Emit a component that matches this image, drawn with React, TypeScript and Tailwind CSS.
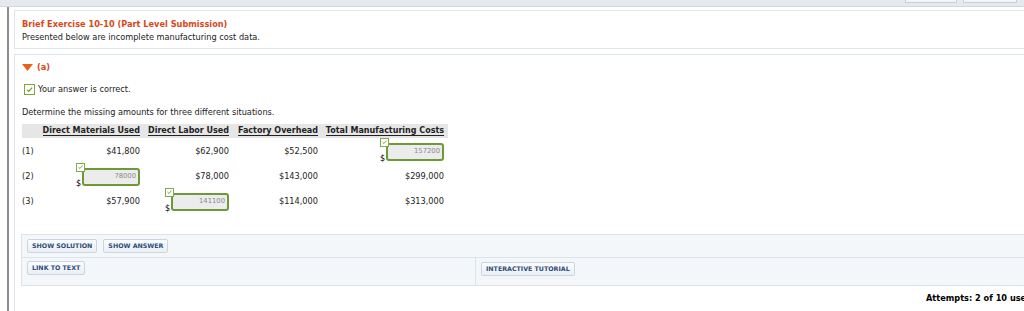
import React from "react";

const font = { fontFamily: '"DejaVu Sans", Verdana, sans-serif' };

function Check({ size = 9 }: { size?: number }) {
  return (
    <svg width={size} height={size} viewBox="0 0 10 10">
      <path d="M2.2 5.2 L4.2 7.1 L7.9 3" fill="none" stroke="#6c9a2f" strokeWidth="1.3" />
    </svg>
  );
}

function Ans({ v }: { v: string }) {
  return (
    <div className="relative ml-auto h-[18px] w-[58px]">
      <span className="absolute bottom-[-2px] left-[-6px] text-[8px] leading-none text-black">$</span>
      <div className="absolute left-[-6px] top-[-5px] z-10 flex h-[9px] w-[9px] items-center justify-center border border-[#84a94c] bg-white">
        <Check size={8} />
      </div>
      <div className="relative flex h-full w-full items-center justify-end rounded-[3px] border-2 border-[#6e9a36] bg-[#ececec] pr-[2px] text-[6.8px] text-[#8a8a8a]">
        {v}
      </div>
    </div>
  );
}

function Btn({ children }: { children: React.ReactNode }) {
  return (
    <div className="flex h-[14px] items-center rounded-[2px] border border-[#cdd6e0] bg-gradient-to-b from-[#fbfcfd] to-[#eaeff4] px-[4px] text-[6.3px] font-bold text-[#2d4b7c]">
      {children}
    </div>
  );
}

const H = ({ children }: { children: React.ReactNode }) => (
  <span className="whitespace-nowrap border-b border-[#222] leading-[10px]">{children}</span>
);

export default function App() {
  const rows: React.ReactNode[][] = [
    ["(1)", "$41,800", "$62,900", "$52,500", <Ans v="157200" />],
    ["(2)", <Ans v="78000" />, "$78,000", "$143,000", "$299,000"],
    ["(3)", "$57,900", <Ans v="141100" />, "$114,000", "$313,000"],
  ];
  return (
    <div className="relative h-[311px] w-[1024px] overflow-hidden bg-white text-[8.2px] text-[#222]" style={font}>
      <div className="flex h-[7px] justify-end gap-[6px] border-b border-[#cfd7e0] bg-[#e6eaee] pr-[7px]">
        <div className="h-[3px] w-[52px] border border-t-0 border-[#c7cfd8] bg-[#f2f4f6]" />
        <div className="h-[3px] w-[54px] border border-t-0 border-[#c7cfd8] bg-[#f2f4f6]" />
      </div>
      <div className="flex h-[304px]">
        <div className="w-[14px] shrink-0">
          <div className="ml-[7px] h-full w-[2px] bg-[#8d8d8d]" />
        </div>
        <div className="flex-1">
          <div className="mt-[3px] h-[39px] border border-r-0 border-[#dfe5ec] pl-[7px]">
            <div className="mt-[8px] h-[10px] font-bold leading-[10px] text-[#d8481a]">
              Brief Exercise 10-10 (Part Level Submission)
            </div>
            <div className="mt-[3px] h-[10px] leading-[10px]">
              Presented below are incomplete manufacturing cost data.
            </div>
          </div>
          <div className="mt-[5px] h-[260px] border border-r-0 border-b-0 border-[#dfe5ec] pl-[7px]">
            <div className="mt-[6px] flex h-[13px] items-center gap-[4px]">
              <svg width="11" height="7" viewBox="0 0 11 7">
                <path d="M0 0 L11 0 L5.5 7 Z" fill="#e8611c" />
              </svg>
              <span className="font-bold text-[#d8481a]">(a)</span>
            </div>
            <div className="mt-[9px] flex h-[12px] items-center gap-[3px] pl-[2px]">
              <div className="flex h-[11px] w-[11px] items-center justify-center border-[1.5px] border-[#7ea63f] bg-white">
                <Check size={9} />
              </div>
              <span>Your answer is correct.</span>
            </div>
            <div className="mt-[11px] flex h-[12px] items-center">
              Determine the missing amounts for three different situations.
            </div>
            <div className="mt-[6px] w-[426px]">
              <div className="grid h-[14px] grid-cols-[19px_99px_89px_89px_128px] items-center bg-[#e6e6e6] text-[8px] font-bold">
                <div />
                <div className="text-right"><H>Direct Materials Used</H></div>
                <div className="text-right"><H>Direct Labor Used</H></div>
                <div className="text-right"><H>Factory Overhead</H></div>
                <div className="pr-[2px] text-right"><H>Total Manufacturing Costs</H></div>
              </div>
              {rows.map((r, i) => (
                <div key={i} className={`grid h-[25px] grid-cols-[19px_99px_89px_89px_128px] items-center ${i === 0 ? "mt-[1px]" : ""}`}>
                  {r.map((c, j) => (
                    <div key={j} className={`${j === 0 ? "text-left" : "flex justify-end text-right"} ${j === 4 ? "pr-[2px]" : ""}`}>
                      {c}
                    </div>
                  ))}
                </div>
              ))}
            </div>
            <div className="ml-[-1px] mt-[20px] border border-r-0 border-[#dde3ea] bg-[#f4f7fa]">
              <div className="flex h-[23px] items-start gap-[6px] border-b border-[#dde3ea] pl-[5px] pt-[4px]">
                <Btn>SHOW SOLUTION</Btn>
                <Btn>SHOW ANSWER</Btn>
              </div>
              <div className="flex h-[27px]">
                <div className="w-[454px] border-r border-[#dde3ea] pl-[5px] pt-[3px]">
                  <div className="flex"><Btn>LINK TO TEXT</Btn></div>
                </div>
                <div className="pl-[5px] pt-[4px]">
                  <div className="flex"><Btn>INTERACTIVE TUTORIAL</Btn></div>
                </div>
              </div>
            </div>
            <div className="mr-[-8px] mt-[6px] flex justify-end whitespace-nowrap font-bold text-black">
              Attempts: 2 of 10 used
            </div>
          </div>
        </div>
      </div>
    </div>
  );
}
